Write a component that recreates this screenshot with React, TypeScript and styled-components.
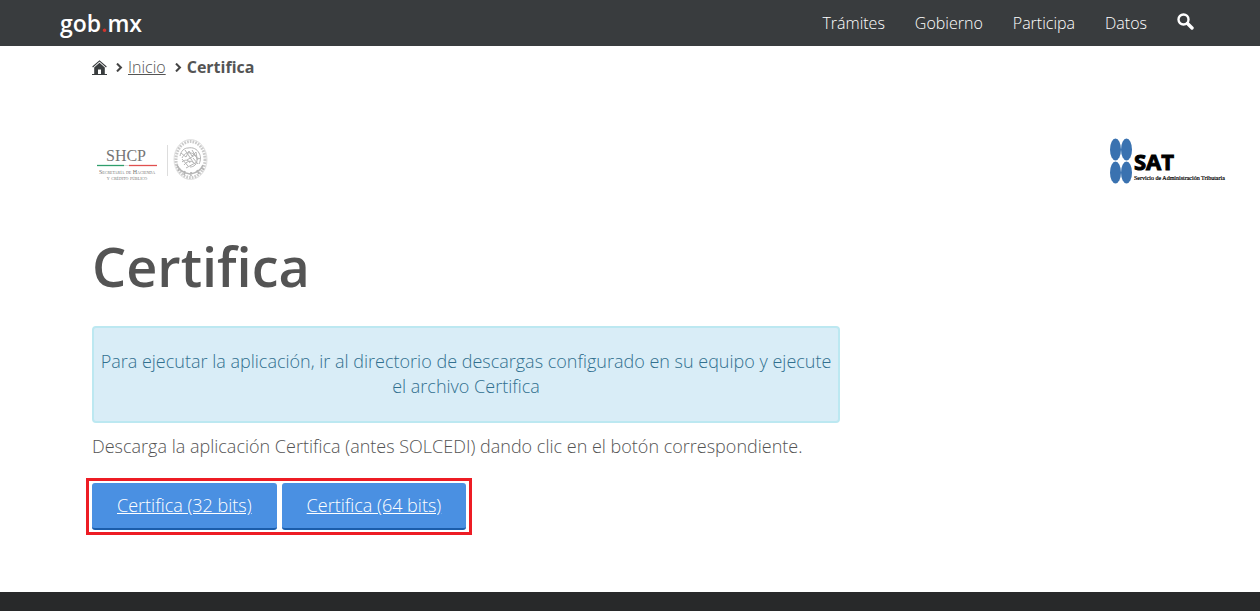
import React from "react";
import styled, { createGlobalStyle } from "styled-components";

const Global = createGlobalStyle`
  *, *::before, *::after { box-sizing: border-box; }
  body {
    margin: 0;
    background: #fff;
    color: #545454;
    font-family: "Open Sans", sans-serif;
    font-weight: 300;
    font-size: 18px;
    line-height: 25px;
  }
`;

const Page = styled.div`
  min-height: 100vh;
  display: flex;
  flex-direction: column;
`;

const TopBar = styled.header`
  height: 46px;
  padding: 0 66px 0 60px;
  display: flex;
  align-items: center;
  justify-content: space-between;
  background: #393c3e;
`;

const Brand = styled.a`
  color: #fff;
  font-size: 23px;
  font-weight: 600;
  line-height: 46px;
  text-decoration: none;
`;

const BrandDot = styled.span`
  color: #d0342c;
`;

const Nav = styled.nav`
  display: flex;
  align-items: center;
  gap: 30px;
`;

const NavLink = styled.a`
  color: #fff;
  font-size: 16px;
  font-weight: 300;
  line-height: 46px;
  text-decoration: none;
`;

const SearchButton = styled.button`
  display: flex;
  padding: 0 0 3px;
  border: 0;
  background: none;
  color: #fff;
  cursor: pointer;
`;

const Main = styled.main`
  flex: 1;
  padding: 9px 28px 56px 92px;
`;

const Breadcrumb = styled.nav`
  display: flex;
  align-items: center;
  font-size: 16px;
  line-height: 24px;
`;

const HomeLink = styled.a`
  display: flex;
  margin-right: 8px;
  border-bottom: 1px solid #393c3e;
`;

const CrumbLink = styled.a`
  margin: 0 8px 0 5px;
  color: #545454;
`;

const CrumbCurrent = styled.span`
  margin-left: 5px;
  font-weight: 700;
`;

const Logos = styled.div`
  display: flex;
  justify-content: space-between;
  align-items: center;
  margin-top: 58px;
  padding: 0 4px;
`;

const Title = styled.h1`
  margin: 48px 0 26px;
  font-size: 54px;
  font-weight: 600;
  line-height: 67px;
`;

const Columns = styled.div`
  display: grid;
  grid-template-columns: minmax(0, 2fr) minmax(0, 1fr);
  gap: 18px;
`;

const Notice = styled.div`
  padding: 21px 6px 22px;
  border: 2px solid #bce8f1;
  border-radius: 4px;
  background: #d9edf7;
  color: #31708f;
  text-align: center;
`;

const Paragraph = styled.p`
  margin: 11px 0 19px;
`;

const Downloads = styled.div`
  width: fit-content;
  display: flex;
  gap: 5px;
  margin-left: -6px;
  padding: 2px 3px;
  border: 3px solid #ed1c24;
`;

const DownloadLink = styled.a`
  padding: 10px 25px;
  border-bottom: 2px solid #1b5dab;
  border-radius: 3px;
  background: #4a90e2;
  color: #fff;
`;

const Footer = styled.footer`
  height: 19px;
  background: #28292a;
`;

const SearchIcon = () => (
  <svg width="17" height="17" viewBox="0 0 17 17" fill="none" stroke="currentColor" aria-hidden="true">
    <circle cx="6.5" cy="6.5" r="5" strokeWidth="2.4" />
    <path d="M10.5 10.5 15 15" strokeWidth="3.4" strokeLinecap="round" />
  </svg>
);

const HomeIcon = () => (
  <svg width="15" height="14" viewBox="0 0 15 14" aria-hidden="true">
    <path d="M.6 7 7.5.9 14.4 7" fill="none" stroke="#393c3e" strokeWidth="1.1" />
    <path d="M2.2 7.4 7.5 2.8l5.300 4.600V14H9V9.500H6V14H2.200z" fill="#393c3e" />
  </svg>
);

const Chevron = () => (
  <svg width="8" height="9" viewBox="0 0 8 9" aria-hidden="true">
    <path d="M2 .6 5.900 4.500 2 8.400" fill="none" stroke="#454545" strokeWidth="2.100" />
  </svg>
);

const ShcpLogo = () => (
  <svg width="114" height="46" viewBox="0 0 114 46" role="img" aria-label="SHCP">
    <g fontFamily='"Liberation Serif", serif' textAnchor="middle" fill="#757575">
      <text x="30" y="23" fontSize="16">SHCP</text>
      <text x="31" y="36" fontSize="6" fontVariant="small-caps">Secretaría de Hacienda</text>
      <text x="31" y="42" fontSize="6" fontVariant="small-caps">y crédito público</text>
    </g>
    <path d="M1 27.500h27" stroke="#2f9e6c" strokeWidth="1.300" />
    <path d="M28 27.500h5" stroke="#ddd" />
    <path d="M33 27.500h28" stroke="#e0504f" strokeWidth="1.300" />
    <path d="M71.500 7v31" stroke="#ddd" />
    <g fill="none" stroke="#b4b4b4">
      <ellipse cx="94.500" cy="21.500" rx="14.500" ry="18" strokeWidth="3" strokeDasharray="1.700 1.100" opacity=".7" />
      <ellipse cx="94.500" cy="21.500" rx="16.500" ry="20" strokeWidth=".4" />
      <path d="M84 18c1-5 4-8 8-8 5-1 9 1 11 5 2 3 2 7 0 11M86 20c2-4 5-6 8-5 4 0 7 3 7 7s-3 7-7 7M86 24c3-3 7-2 8 1M85 15l5 4 3-6 3 5 4-4 1 6 4 1M88 27c4-5 8-5 12 0M91 22l8-5M90 30l11-6M89 12l8 12M96 12l6 10M86 21l6 7M97 20l5 6" strokeWidth="1" />
      <path d="M81 27c2 5 6 8 13 9 7-1 11-4 13-9M84 30l-2 3M89 33l-1 4M95 34v4M101 32l2 4M105 29l3 3" strokeWidth="1.600" />
    </g>
  </svg>
);

const SatLogo = () => (
  <svg width="122" height="48" viewBox="0 0 122 48" role="img" aria-label="SAT">
    <g fill="#3a72b0">
      <ellipse cx="9.500" cy="12.500" rx="5.500" ry="11" />
      <ellipse cx="20.500" cy="12.500" rx="5.500" ry="11" />
      <ellipse cx="9.500" cy="35.500" rx="5.500" ry="11" />
      <ellipse cx="20.500" cy="35.500" rx="5.500" ry="11" />
    </g>
    <text x="28" y="33" fill="#000" stroke="#000" fontFamily='"Open Sans", sans-serif' fontSize="22" fontWeight="700">SAT</text>
    <text x="28" y="43" fill="#000" stroke="#000" strokeWidth=".2" fontFamily='"Liberation Serif", serif' fontSize="6">Servicio de Administración Tributaria</text>
  </svg>
);

const navItems = ["Trámites", "Gobierno", "Participa", "Datos"];
const downloads = ["Certifica (32 bits)", "Certifica (64 bits)"];

export default function App() {
  return (
    <Page>
      <Global />
      <TopBar>
        <Brand href="#">gob<BrandDot>.</BrandDot>mx</Brand>
        <Nav aria-label="Principal">
          {navItems.map((item) => <NavLink key={item} href="#">{item}</NavLink>)}
          <SearchButton type="button" aria-label="Buscar"><SearchIcon /></SearchButton>
        </Nav>
      </TopBar>
      <Main>
        <Breadcrumb aria-label="Ruta">
          <HomeLink href="#" aria-label="Portada"><HomeIcon /></HomeLink>
          <Chevron />
          <CrumbLink href="#">Inicio</CrumbLink>
          <Chevron />
          <CrumbCurrent>Certifica</CrumbCurrent>
        </Breadcrumb>
        <Logos>
          <ShcpLogo />
          <SatLogo />
        </Logos>
        <Title>Certifica</Title>
        <Columns>
          <section>
            <Notice>
              Para ejecutar la aplicación, ir al directorio de descargas configurado en su equipo y ejecute el archivo Certifica
            </Notice>
            <Paragraph>
              Descarga la aplicación Certifica (antes SOLCEDI) dando clic en el botón correspondiente.
            </Paragraph>
            <Downloads>
              {downloads.map((label) => <DownloadLink key={label} href="#">{label}</DownloadLink>)}
            </Downloads>
          </section>
        </Columns>
      </Main>
      <Footer />
    </Page>
  );
}
